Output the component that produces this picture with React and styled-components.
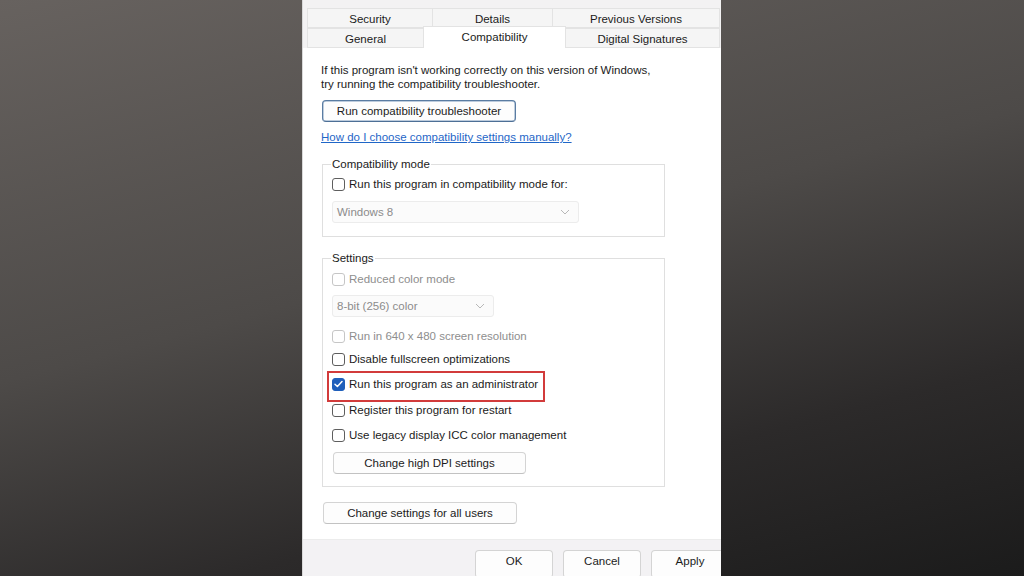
import React from 'react';
import styled, { createGlobalStyle } from 'styled-components';

const GlobalStyle = createGlobalStyle`
	html, body {
		margin: 0;
		padding: 0;
	}
	body {
		font-family: 'Liberation Sans', Arial, sans-serif;
	}
`;

// Tab layout (two stacked rows, like the Windows property sheet)
const tabRows = [
	[
		{ label: 'Security', width: 126 },
		{ label: 'Details', width: 121 },
		{ label: 'Previous Versions' },
	],
	[
		{ label: 'General', width: 117 },
		{ label: 'Compatibility', width: 143, active: true },
		{ label: 'Digital Signatures' },
	],
];

const settings = [
	{ label: 'Reduced color mode', disabled: true, mt: 7 },
	{ select: '8-bit (256) color', width: 162, mt: 9 },
	{ label: 'Run in 640 x 480 screen resolution', disabled: true, mt: 12 },
	{ label: 'Disable fullscreen optimizations', mt: 9 },
	{ label: 'Run this program as an administrator', checked: true, highlight: true, mt: 11 },
	{ label: 'Register this program for restart', mt: 12 },
	{ label: 'Use legacy display ICC color management', mt: 11 },
];

const Check = () => (
	<svg width='9' height='8' viewBox='0 0 9 8'>
		<path d='M1 4.2 L3.4 6.5 L8 1.5' fill='none' stroke='#fff' strokeWidth='1.5' strokeLinecap='round' strokeLinejoin='round' />
	</svg>
);

const Chevron = () => (
	<svg width='10' height='6' viewBox='0 0 10 6'>
		<path d='M1 1 L5 5 L9 1' fill='none' stroke='#b8b8b8' strokeWidth='1' />
	</svg>
);

const CheckOption = ({ label, checked, disabled, mt }) => (
	<CheckRow $disabled={disabled} $mt={mt}>
		<Box $checked={checked} $disabled={disabled}>
			{checked && <Check />}
		</Box>
		{label}
	</CheckRow>
);

const App = () => {
	return (
		<>
			<GlobalStyle />
			<Page>
				<Dialog>
					<TabStrip>
						{tabRows.map((row, i) => (
							<TabRow key={i}>
								{row.map((tab) => (
									<Tab key={tab.label} $width={tab.width} $active={tab.active}>
										{tab.label}
									</Tab>
								))}
							</TabRow>
						))}
					</TabStrip>
					<Content>
						<Intro>
							If this program isn't working correctly on this version of Windows,
							<br />
							try running the compatibility troubleshooter.
						</Intro>
						<Button $w={194} $mt={9} $ml={1} $primary>
							Run compatibility troubleshooter
						</Button>
						<Link href='#'>How do I choose compatibility settings manually?</Link>

						<Group $pb={13} $mt={13}>
							<Legend>Compatibility mode</Legend>
							<CheckOption label='Run this program in compatibility mode for:' mt={6} />
							<Select $w={247} $mt={10}>
								Windows 8
								<Chevron />
							</Select>
						</Group>

						<Group $pb={12} $mt={14}>
							<Legend>Settings</Legend>
							{settings.map((item) => {
								if (item.select) {
									return (
										<Select key={item.select} $w={item.width} $mt={item.mt}>
											{item.select}
											<Chevron />
										</Select>
									);
								}
								if (item.highlight) {
									return (
										<Highlight key={item.label} $mt={item.mt}>
											<CheckOption label={item.label} checked={item.checked} />
										</Highlight>
									);
								}
								return <CheckOption key={item.label} {...item} />;
							})}
							<Button $w={193} $mt={10} $ml={1}>
								Change high DPI settings
							</Button>
						</Group>

						<Button $w={194} $mt={15} $ml={2}>
							Change settings for all users
						</Button>
					</Content>
					<Footer>
						<FooterButton>OK</FooterButton>
						<FooterButton>Cancel</FooterButton>
						<FooterButton>Apply</FooterButton>
					</Footer>
				</Dialog>
			</Page>
		</>
	);
};

const Page = styled.div`
	width: 1024px;
	height: 576px;
	overflow: hidden;
	display: flex;
	justify-content: center;
	background: linear-gradient(165deg, #67625f 0%, #4d4a48 45%, #2c2a2a 75%, #1b1b1b 100%);
`;

const Dialog = styled.div`
	width: 418px;
	height: 576px;
	display: flex;
	flex-direction: column;
	overflow: hidden;
	background: #f3f2f3;
	box-shadow: -1px 0 0 #d9d9d9;
`;

const TabStrip = styled.div`
	display: flex;
	flex-direction: column;
	padding: 8px 1px 0 4px;
`;

const TabRow = styled.div`
	display: flex;
	height: 20px;
	align-items: flex-start;
`;

const Tab = styled.div`
	flex: ${(p) => (p.$width ? `0 0 ${p.$width}px` : '1 1 auto')};
	box-sizing: border-box;
	height: ${(p) => (p.$active ? '22px' : '20px')};
	margin-top: ${(p) => (p.$active ? '-2px' : '0')};
	margin-left: -1px;
	position: relative;
	z-index: ${(p) => (p.$active ? 1 : 0)};
	border: 1px solid #e3e3e3;
	border-bottom: ${(p) => (p.$active ? 'none' : '1px solid #e3e3e3')};
	background: ${(p) => (p.$active ? '#ffffff' : '#f5f5f5')};
	color: #1b1b1b;
	font-size: 11.5px;
	line-height: 20px;
	text-align: center;
	&:first-child {
		margin-left: 0;
	}
`;

const Content = styled.div`
	display: flex;
	flex-direction: column;
	align-items: flex-start;
	background: #ffffff;
	padding: 15px 18px 15px 18px;
`;

const Intro = styled.p`
	margin: 0;
	font-size: 11.5px;
	line-height: 14px;
	color: #1b1b1b;
`;

const Button = styled.button`
	display: flex;
	align-items: center;
	justify-content: center;
	box-sizing: border-box;
	width: ${(p) => p.$w}px;
	height: 22px;
	margin: ${(p) => p.$mt || 0}px 0 0 ${(p) => p.$ml || 0}px;
	padding: 0;
	font-family: 'Liberation Sans', Arial, sans-serif;
	font-size: 11.5px;
	color: #1b1b1b;
	background: #fdfdfd;
	border: 1px solid ${(p) => (p.$primary ? '#5a7ca2' : '#d4d4d4')};
	border-bottom-color: ${(p) => (p.$primary ? '#4d6f96' : '#c2c2c2')};
	border-radius: 4px;
	box-shadow: ${(p) => (p.$primary ? 'inset 0 0 0 0.5px #7f9cbd' : 'none')};
`;

const Link = styled.a`
	display: block;
	margin-top: 8px;
	font-size: 11.5px;
	line-height: 14px;
	color: #1f66c7;
	text-decoration: underline;
`;

const Group = styled.fieldset`
	display: flex;
	flex-direction: column;
	align-items: flex-start;
	width: 343px;
	box-sizing: border-box;
	min-width: 0;
	margin: ${(p) => p.$mt}px 0 0 1px;
	padding: 0 9px ${(p) => p.$pb}px 9px;
	border: 1px solid #dfdfdf;
`;

const Legend = styled.legend`
	margin-left: -1px;
	padding: 0 1px;
	font-size: 11.5px;
	line-height: 14px;
	color: #1b1b1b;
`;

const CheckRow = styled.label`
	display: flex;
	align-items: center;
	gap: 4px;
	height: 14px;
	margin-top: ${(p) => p.$mt || 0}px;
	font-size: 11.5px;
	white-space: nowrap;
	color: ${(p) => (p.$disabled ? '#8e8e8e' : '#1b1b1b')};
`;

const Box = styled.span`
	display: flex;
	align-items: center;
	justify-content: center;
	flex: 0 0 13px;
	width: 13px;
	height: 13px;
	box-sizing: border-box;
	border-radius: 3px;
	border: 1px solid
		${(p) => (p.$checked ? '#1f5fbb' : p.$disabled ? '#c6c6c6' : '#5e5e5e')};
	background: ${(p) => (p.$checked ? '#1f5fbb' : '#ffffff')};
`;

const Select = styled.div`
	display: flex;
	align-items: center;
	justify-content: space-between;
	box-sizing: border-box;
	width: ${(p) => p.$w}px;
	height: 22px;
	margin-top: ${(p) => p.$mt}px;
	padding: 0 8px 0 4px;
	border: 1px solid #ececec;
	border-radius: 3px;
	background: #fbfbfb;
	font-size: 11.5px;
	color: #8c8c8c;
`;

const Highlight = styled.div`
	position: relative;
	margin-top: ${(p) => p.$mt}px;
	&::after {
		content: '';
		position: absolute;
		left: -5px;
		top: -6px;
		bottom: -11px;
		width: 218px;
		box-sizing: border-box;
		border: 2px solid #d23b3b;
		pointer-events: none;
	}
`;

const Footer = styled.div`
	flex: 1;
	display: flex;
	gap: 10px;
	padding: 10px 0 0 172px;
	background: #f3f2f4;
	border-top: 1px solid #ececec;
`;

const FooterButton = styled(Button)`
	flex: 0 0 78px;
	width: 78px;
	height: 28px;
	margin: 0;
	align-items: flex-start;
	padding-top: 4px;
`;

export default App;
